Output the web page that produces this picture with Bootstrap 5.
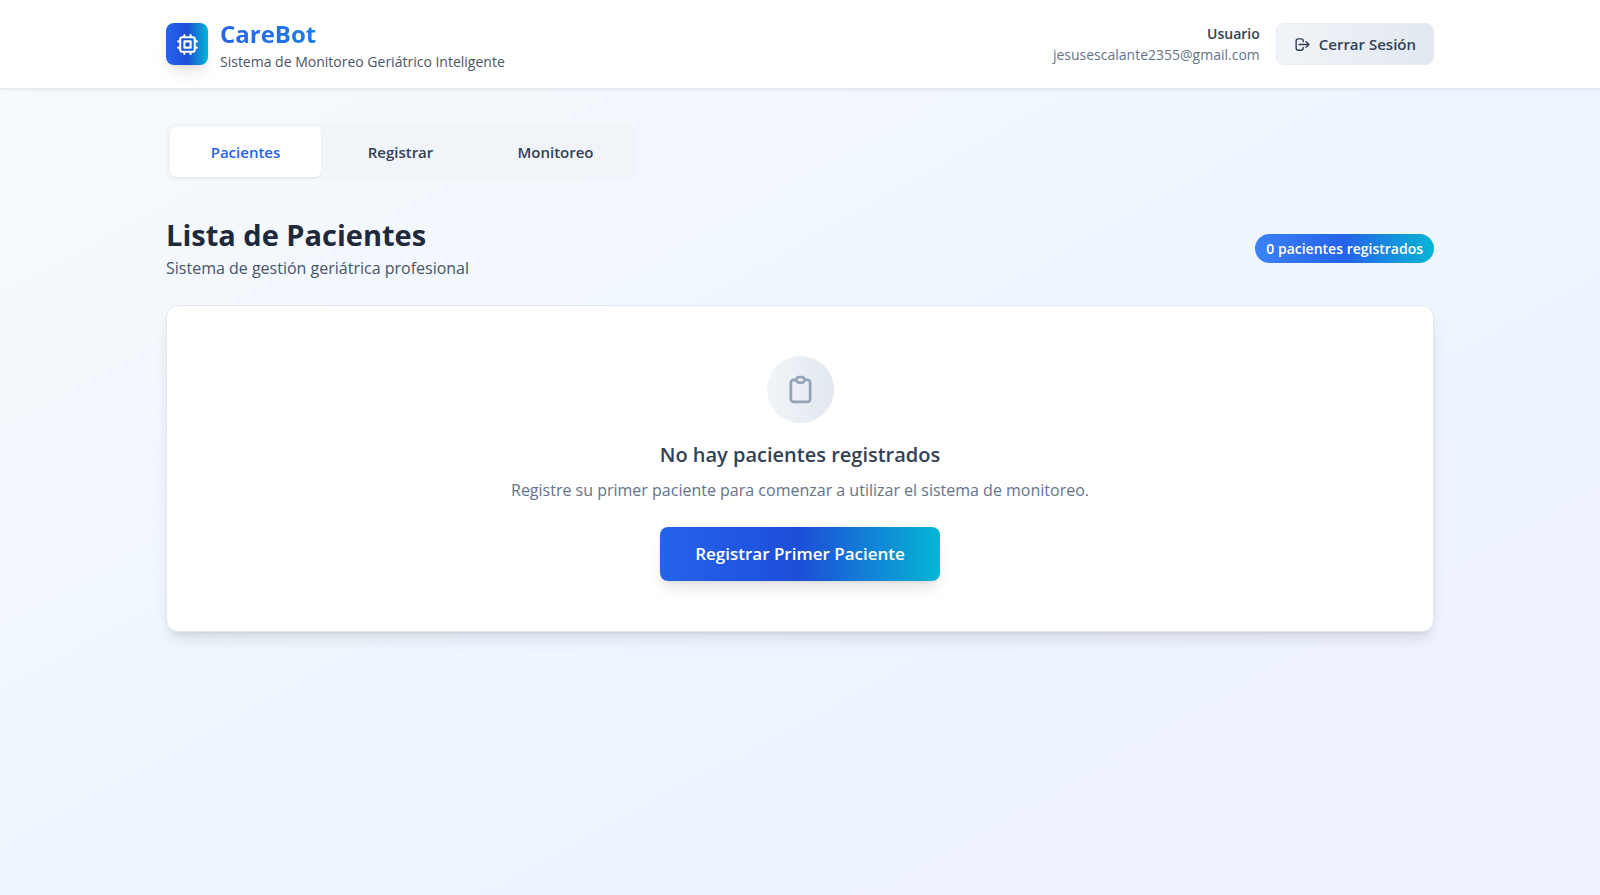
<!DOCTYPE html>
<html lang="es">
<head>
<meta charset="utf-8">
<meta name="viewport" content="width=device-width, initial-scale=1">
<title>CareBot</title>
<link href="https://cdn.jsdelivr.net/npm/bootstrap@5.3.0/dist/css/bootstrap.min.css" rel="stylesheet">
<style>
body{font-family:"Open Sans","Noto Sans",sans-serif;font-size:16px;line-height:26px;color:#1e293b;min-height:100vh;background:linear-gradient(to bottom right,#f8fafc 0%,#eff6ff 50%,#eef2ff 100%)}
.shell{max-width:1332px;padding-left:32px;padding-right:32px}
.site-head{background:#fff;border-bottom:1px solid #e2e8f0;box-shadow:0 1px 3px rgba(0,0,0,.08)}
.site-head .shell{min-height:88px}
.brand-tile{width:42px;height:42px;border-radius:8px;background:linear-gradient(90deg,#2563eb,#1d4ed8 50%,#06b6d4);box-shadow:0 10px 15px -3px rgba(0,0,0,.1),0 4px 6px -4px rgba(0,0,0,.1)}
.brand-name{font-size:24px;line-height:34px;font-weight:700;margin:0;background:linear-gradient(90deg,#2563eb,#06b6d4);-webkit-background-clip:text;background-clip:text;color:transparent}
.fine{font-size:14px;line-height:21px}
.tone-a{color:#475569}.tone-b{color:#64748b}.tone-c{color:#334155}
.semi{font-weight:600}
.btn-exit{height:42px;padding:0 17px;border:1px solid #e8edf3;border-radius:8px;font-size:15px;font-weight:600;color:#334155;background:linear-gradient(90deg,#f1f5f9,#e2e8f0)}
.tabs{display:grid;width:fit-content;grid-template-columns:repeat(3,151px);gap:4px;padding:4px;margin:34px 0;border-radius:8px;background:#f1f5f9}
.tabs .nav-link{height:50px;padding:0;border:0;border-radius:6px;font-size:15px;font-weight:600;color:#334155;background:transparent}
.tabs .nav-link.active{background:#fff;color:#2563eb;box-shadow:0 1px 2px rgba(0,0,0,.08)}
.page-title{font-size:29px;line-height:40px;font-weight:700;margin:0}
.count{padding:4px 11px;font-size:14px;line-height:21px;font-weight:600;background:linear-gradient(90deg,#3b82f6,#2563eb 50%,#06b6d4)}
.panel{border:1px solid #e2e8f0;border-radius:12px;padding:50px 32px;box-shadow:0 10px 15px -3px rgba(0,0,0,.1),0 4px 6px -4px rgba(0,0,0,.1)}
.disc{width:67px;height:67px;margin-bottom:18px;background:linear-gradient(90deg,#f1f5f9,#e2e8f0)}
.empty-title{font-size:20px;line-height:28px;font-weight:600;margin:0}
.btn-main{height:54px;padding:0 35px;border:0;border-radius:8px;font-size:17px;font-weight:600;color:#fff;background:linear-gradient(90deg,#2563eb,#1d4ed8 50%,#06b6d4);box-shadow:0 10px 15px -3px rgba(0,0,0,.1),0 4px 6px -4px rgba(0,0,0,.1)}
.btn-main:hover{color:#fff}
</style>
</head>
<body>
<header class="site-head">
  <div class="shell container-fluid d-flex align-items-center justify-content-between">
    <div class="d-flex align-items-center">
      <div class="brand-tile d-flex align-items-center justify-content-center">
        <svg width="25" height="25" viewBox="0 0 24 24" fill="none" stroke="#fff" stroke-width="2" stroke-linecap="round" stroke-linejoin="round" aria-hidden="true"><path d="M9 3v2m6-2v2M9 19v2m6-2v2M5 9H3m2 6H3m18-6h-2m2 6h-2M7 19h10a2 2 0 002-2V7a2 2 0 00-2-2H7a2 2 0 00-2 2v10a2 2 0 002 2zM9 9h6v6H9V9z"/></svg>
      </div>
      <div class="ms-2 ps-1">
        <h1 class="brand-name">CareBot</h1>
        <p class="fine tone-a mb-0">Sistema de Monitoreo Geriátrico Inteligente</p>
      </div>
    </div>
    <div class="d-flex align-items-center gap-3">
      <div class="text-end fine">
        <div class="semi tone-c">Usuario</div>
        <div class="tone-b">jesusescalante2355@gmail.com</div>
      </div>
      <button type="button" class="btn btn-exit d-flex align-items-center gap-2">
        <svg width="17" height="17" viewBox="0 0 24 24" fill="none" stroke="currentColor" stroke-width="2" stroke-linecap="round" stroke-linejoin="round" aria-hidden="true"><path d="M17 16l4-4m0 0l-4-4m4 4H7m6 4v1a3 3 0 01-3 3H6a3 3 0 01-3-3V7a3 3 0 013-3h4a3 3 0 013 3v1"/></svg>
        Cerrar Sesión
      </button>
    </div>
  </div>
</header>
<main class="shell container-fluid">
  <div class="tabs" role="tablist">
    <button type="button" class="nav-link active" role="tab" aria-selected="true">Pacientes</button>
    <button type="button" class="nav-link" role="tab" aria-selected="false">Registrar</button>
    <button type="button" class="nav-link" role="tab" aria-selected="false">Monitoreo</button>
  </div>
  <div class="d-flex align-items-center justify-content-between mb-4">
    <div>
      <h2 class="page-title">Lista de Pacientes</h2>
      <p class="tone-a mb-0">Sistema de gestión geriátrica profesional</p>
    </div>
    <span class="badge rounded-pill count">0 pacientes registrados</span>
  </div>
  <section class="card panel d-flex flex-column align-items-center text-center">
    <div class="disc rounded-circle d-flex align-items-center justify-content-center">
      <svg width="33" height="33" viewBox="0 0 24 24" fill="none" stroke="#94a3b8" stroke-width="2" stroke-linecap="round" stroke-linejoin="round" aria-hidden="true"><path d="M9 5H7a2 2 0 00-2 2v12a2 2 0 002 2h10a2 2 0 002-2V7a2 2 0 00-2-2h-2M9 5a2 2 0 002 2h2a2 2 0 002-2M9 5a2 2 0 012-2h2a2 2 0 012 2"/></svg>
    </div>
    <h3 class="empty-title tone-c mb-2">No hay pacientes registrados</h3>
    <p class="tone-b mb-4">Registre su primer paciente para comenzar a utilizar el sistema de monitoreo.</p>
    <button type="button" class="btn btn-main">Registrar Primer Paciente</button>
  </section>
</main>
<script src="https://cdn.jsdelivr.net/npm/bootstrap@5.3.0/dist/js/bootstrap.bundle.min.js"></script>
</body>
</html>
